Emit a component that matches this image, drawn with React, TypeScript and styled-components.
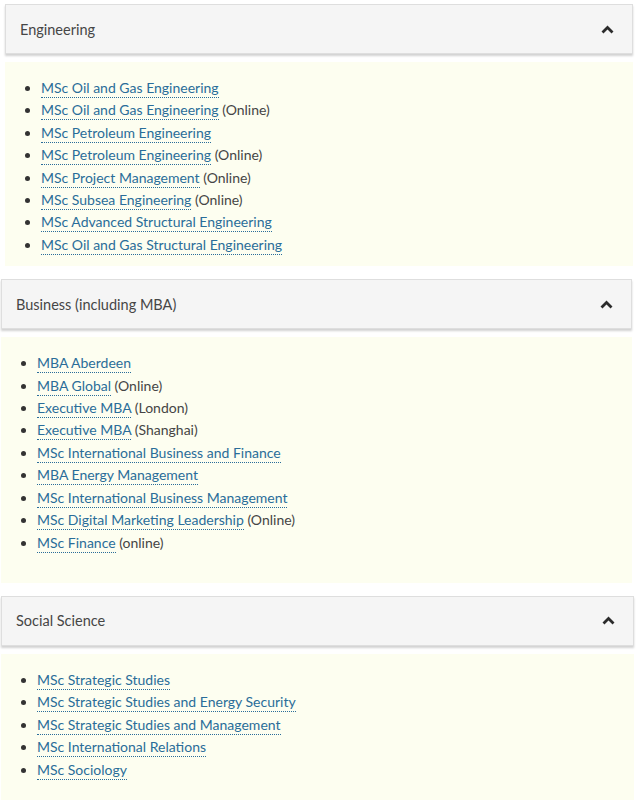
import React from "react"
import styled, { createGlobalStyle } from "styled-components"

const GlobalStyle = createGlobalStyle`
    body {
        margin: 0;
        background: #ffffff;
        font-family: "Lato", "Liberation Sans", sans-serif;
        -webkit-font-smoothing: antialiased;
    }
`

type Course = {
    name: string
    note?: string
}

type SectionData = {
    title: string
    left: number
    right: number
    bottom: number
    courses: Course[]
}

const sections: SectionData[] = [
    {
        title: "Engineering",
        left: 5,
        right: 3,
        bottom: 10,
        courses: [
            { name: "MSc Oil and Gas Engineering" },
            { name: "MSc Oil and Gas Engineering", note: "(Online)" },
            { name: "MSc Petroleum Engineering" },
            { name: "MSc Petroleum Engineering", note: "(Online)" },
            { name: "MSc Project Management", note: "(Online)" },
            { name: "MSc Subsea Engineering", note: "(Online)" },
            { name: "MSc Advanced Structural Engineering" },
            { name: "MSc Oil and Gas Structural Engineering" },
        ],
    },
    {
        title: "Business (including MBA)",
        left: 1,
        right: 4,
        bottom: 29,
        courses: [
            { name: "MBA Aberdeen" },
            { name: "MBA Global", note: "(Online)" },
            { name: "Executive MBA", note: "(London)" },
            { name: "Executive MBA", note: "(Shanghai)" },
            { name: "MSc International Business and Finance" },
            { name: "MBA Energy Management" },
            { name: "MSc International Business Management" },
            { name: "MSc Digital Marketing Leadership", note: "(Online)" },
            { name: "MSc Finance", note: "(online)" },
        ],
    },
    {
        title: "Social Science",
        left: 1,
        right: 2,
        bottom: 27,
        courses: [
            { name: "MSc Strategic Studies" },
            { name: "MSc Strategic Studies and Energy Security" },
            { name: "MSc Strategic Studies and Management" },
            { name: "MSc International Relations" },
            { name: "MSc Sociology" },
        ],
    },
]

const Page = styled.div`
    display: flex;
    flex-direction: column;
    gap: 13px;
    padding-top: 4px;
`

const Section = styled.section<{ $left: number; $right: number }>`
    display: flex;
    flex-direction: column;
    gap: 8px;
    margin-left: ${p => p.$left}px;
    margin-right: ${p => p.$right}px;
`

const Header = styled.div`
    box-sizing: border-box;
    height: 50px;
    display: flex;
    align-items: center;
    justify-content: space-between;
    padding: 0 18px 0 14px;
    background: #f5f5f5;
    border: 1px solid #dedede;
    box-shadow: 0 2px 2px rgba(0, 0, 0, 0.18);
    color: #464646;
    font-size: 14.5px;
`

const Chevron = () => (
    <svg width="13" height="9" viewBox="0 0 13 9">
        <path d="M1.5 7.5 L6.5 2.5 L11.5 7.5" fill="none" stroke="#2b2b2b" strokeWidth="2.8" />
    </svg>
)

const Panel = styled.div<{ $bottom: number }>`
    background: #fdfef0;
    padding: 15px 0 ${p => p.$bottom}px 0;
`

const List = styled.ul`
    margin: 0;
    padding: 0 0 0 36px;
    list-style: disc;
    color: #333333;
    font-size: 14px;
    line-height: 22.4px;
`

const CourseLink = styled.a`
    color: #2a6d99;
    text-decoration: none;
    padding-bottom: 1px;
    border-bottom: 1px dotted #2a6d99;
`

const Note = styled.span`
    color: #454545;
`

export default function App() {
    return (
        <>
            <GlobalStyle />
            <Page>
                {sections.map(section => (
                    <Section key={section.title} $left={section.left} $right={section.right}>
                        <Header>
                            {section.title}
                            <Chevron />
                        </Header>
                        <Panel $bottom={section.bottom}>
                            <List>
                                {section.courses.map((c, i) => (
                                    <li key={i}>
                                        <CourseLink href="#">{c.name}</CourseLink>
                                        {c.note ? <Note> {c.note}</Note> : null}
                                    </li>
                                ))}
                            </List>
                        </Panel>
                    </Section>
                ))}
            </Page>
        </>
    )
}
